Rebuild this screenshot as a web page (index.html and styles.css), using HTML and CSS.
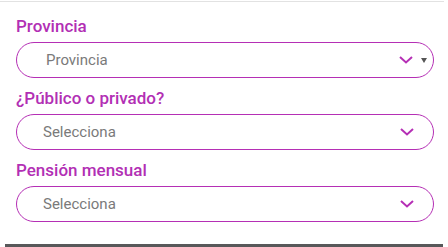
FILE: index.html
```html
<!DOCTYPE html>
<html lang="es">
<head>
    <meta charset="UTF-8">
    <meta name="viewport" content="width=device-width, initial-scale=1.0">
    <title>Formulario</title>
    <link rel="stylesheet" href="styles.css">
</head>
<body>
    <div class="card">
        <div class="field">
            <label class="field-label">Provincia</label>
            <div class="select select-native">
                <span class="select-text">Provincia</span>
                <svg class="chevron" width="14" height="8" viewBox="0 0 14 8"><path d="M1 1 L7 6.5 L13 1" fill="none" stroke="#b52fb5" stroke-width="2"/></svg>
                <svg class="triangle" width="6" height="5" viewBox="0 0 6 5"><path d="M0 0 H6 L3 5 Z" fill="#555"/></svg>
            </div>
        </div>

        <div class="field">
            <label class="field-label">¿Público o privado?</label>
            <div class="select">
                <span class="select-text">Selecciona</span>
                <svg class="chevron" width="14" height="8" viewBox="0 0 14 8"><path d="M1 1 L7 6.5 L13 1" fill="none" stroke="#b52fb5" stroke-width="2"/></svg>
            </div>
        </div>

        <div class="field">
            <label class="field-label">Pensión mensual</label>
            <div class="select">
                <span class="select-text">Selecciona</span>
                <svg class="chevron" width="14" height="8" viewBox="0 0 14 8"><path d="M1 1 L7 6.5 L13 1" fill="none" stroke="#b52fb5" stroke-width="2"/></svg>
            </div>
        </div>
    </div>
    <div class="bottom-bar"></div>
</body>
</html>
```

FILE: styles.css
```css
body {
    margin: 0;
    font-family: Roboto, "Liberation Sans", sans-serif;
    background: #fff;
}
.card {
    width: 444px;
    margin-top: 1px;
    border-top: 1px solid #e2e2e2;
    padding: 14px 0 12px 16px;
    box-sizing: border-box;
}
.field {
    margin-bottom: 10px;
}
.field-label {
    display: block;
    font-size: 17px;
    line-height: 20px;
    font-weight: 500;
    color: #b22fb4;
    margin-bottom: 6px;
}
.select {
    display: flex;
    align-items: center;
    width: 418px;
    height: 36px;
    box-sizing: border-box;
    border: 1px solid #b52fb5;
    border-radius: 18px;
    padding: 0 19px 0 26px;
}
.select-text {
    flex: 1;
    font-size: 15px;
    color: #7a7a7a;
}
.select-native {
    padding: 0 6px 0 29px;
}
.triangle {
    margin-left: 8px;
}
.bottom-bar {
    height: 3px;
    margin: 0 5px;
    width: 438px;
    background: #58585a;
}
```
